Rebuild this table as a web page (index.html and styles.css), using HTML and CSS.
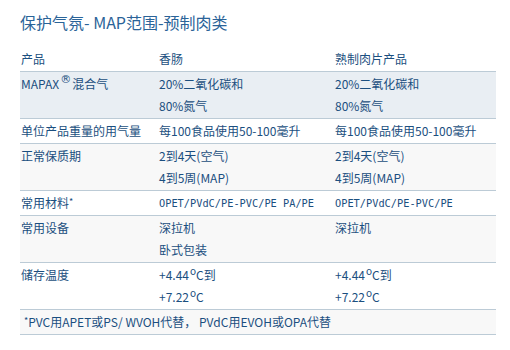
FILE: index.html
```html
<!DOCTYPE html>
<html lang="zh">
<head>
<meta charset="utf-8">
<link rel="stylesheet" href="styles.css">
</head>
<body>
<div class="page">
  <h1 class="title">保护气氛- MAP范围-预制肉类</h1>
  <table class="spec">
    <colgroup>
      <col class="c1"><col class="c2"><col class="c3">
    </colgroup>
    <tr class="head">
      <td>产品</td><td>香肠</td><td>熟制肉片产品</td>
    </tr>
    <tr class="blue">
      <td>MAPAX<sup class="reg">®</sup>混合气</td>
      <td><div>20%二氧化碳和</div><div>80%氮气</div></td>
      <td><div>20%二氧化碳和</div><div>80%氮气</div></td>
    </tr>
    <tr>
      <td>单位产品重量的用气量</td>
      <td>每100食品使用50-100毫升</td>
      <td>每100食品使用50-100毫升</td>
    </tr>
    <tr class="grey">
      <td>正常保质期</td>
      <td><div>2到4天(空气)</div><div>4到5周(MAP)</div></td>
      <td><div>2到4天(空气)</div><div>4到5周(MAP)</div></td>
    </tr>
    <tr>
      <td>常用材料<span class="star">*</span></td>
      <td class="mono">OPET/PVdC/PE-PVC/PE PA/PE</td>
      <td class="mono">OPET/PVdC/PE-PVC/PE</td>
    </tr>
    <tr class="grey">
      <td>常用设备</td>
      <td><div>深拉机</div><div>卧式包装</div></td>
      <td><div>深拉机</div><div>&nbsp;</div></td>
    </tr>
    <tr>
      <td>储存温度</td>
      <td><div>+4.44<sup class="deg">o</sup>C到</div><div>+7.22<sup class="deg">o</sup>C</div></td>
      <td><div>+4.44<sup class="deg">o</sup>C到</div><div>+7.22<sup class="deg">o</sup>C</div></td>
    </tr>
    <tr class="grey foot">
      <td colspan="3"><span class="star">*</span>PVC用APET或PS/ WVOH代替， PVdC用EVOH或OPA代替</td>
    </tr>
  </table>
</div>
</body>
</html>
```

FILE: styles.css
```css
html, body {
  margin: 0;
  padding: 0;
  background: #ffffff;
}

body {
  font-family: "Noto Sans CJK SC", "Noto Sans", sans-serif;
  color: #1b4f80;
}

.page {
  padding: 11px 14px 0 20px;
}

.title {
  margin: 0 0 14px 0;
  font-size: 16px;
  font-weight: normal;
  line-height: 22px;
  color: #2a6398;
}

.spec {
  width: 476px;
  border-collapse: collapse;
  font-size: 12px;
  table-layout: fixed;
}

.c1 { width: 138px; }
.c2 { width: 176px; }
.c3 { width: 162px; }

.spec td {
  padding: 1px 0 1px 1px;
  line-height: 22px;
  vertical-align: top;
  border-bottom: 1px solid #bccbd6;
  white-space: nowrap;
}

.spec tr.blue td {
  background: #e9eef3;
}

.spec tr.grey td {
  background: #f8f8f8;
}

.spec td.mono {
  font-family: "DejaVu Sans Mono", "Liberation Mono", monospace;
  font-size: 10.3px;
}

.reg {
  font-family: "DejaVu Sans", sans-serif;
  font-size: 11px;
  line-height: 0;
  vertical-align: 6px;
  margin: 0 1px 0 1px;
}

.deg {
  font-size: 10px;
  line-height: 0;
  vertical-align: 5px;
  margin: 0 0 0 1px;
}

.star {
  font-size: 9px;
  vertical-align: 3px;
  line-height: 0;
}

.spec tr.foot td {
  padding-left: 4px;
}
```
